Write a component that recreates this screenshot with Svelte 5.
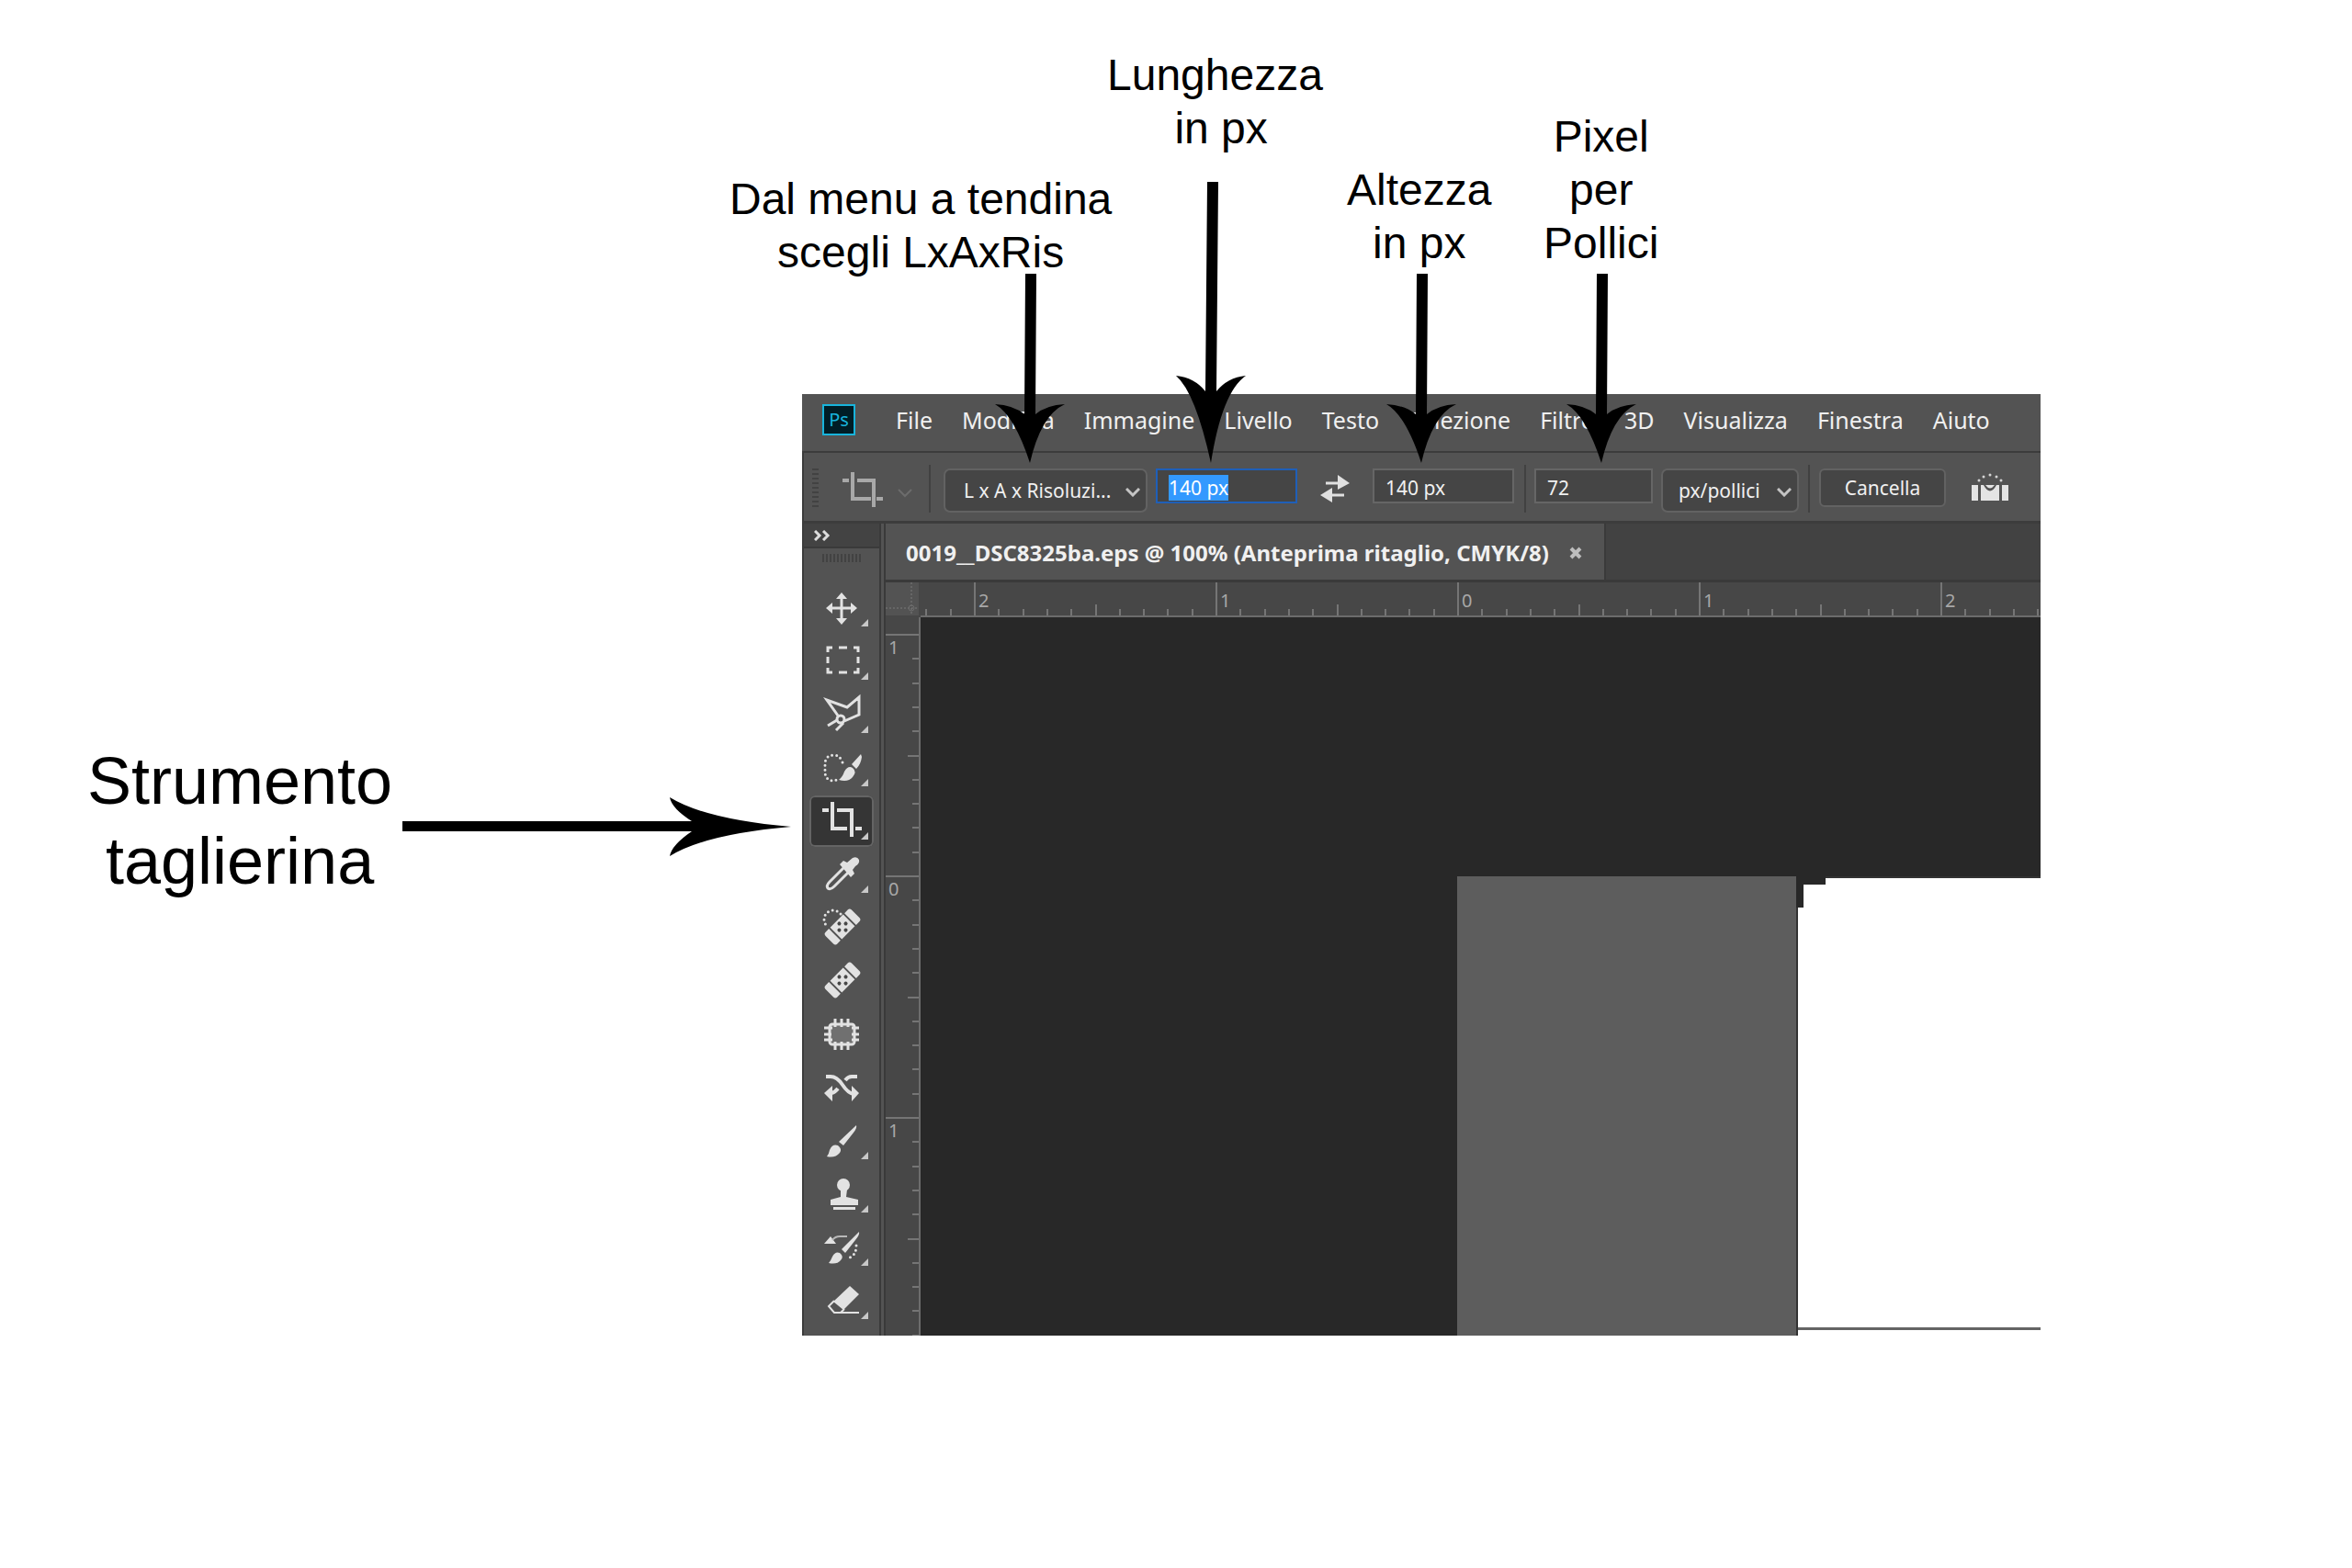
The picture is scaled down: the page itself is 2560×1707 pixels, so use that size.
<script lang="ts">
  import { onMount } from 'svelte';

  const menus = ['File', 'Modifica', 'Immagine', 'Livello', 'Testo', 'Selezione', 'Filtro', '3D', 'Visualizza', 'Finestra', 'Aiuto'];

  const tools = [
    { id: 'move', label: 'Sposta', more: true },
    { id: 'marquee', label: 'Selezione rettangolare', more: true },
    { id: 'lasso', label: 'Lazo poligonale', more: true },
    { id: 'quick', label: 'Selezione rapida', more: true },
    { id: 'crop', label: 'Taglierina', more: true },
    { id: 'dropper', label: 'Contagocce', more: true },
    { id: 'spot', label: 'Pennello correttivo al volo', more: false },
    { id: 'heal', label: 'Pennello correttivo', more: false },
    { id: 'patch', label: 'Toppa', more: false },
    { id: 'shuffle', label: 'Sposta in base al contenuto', more: false },
    { id: 'brush', label: 'Pennello', more: true },
    { id: 'stamp', label: 'Timbro clone', more: true },
    { id: 'history', label: 'Pennello storia', more: true },
    { id: 'eraser', label: 'Gomma', more: true }
  ];

  let activeTool = 'crop';
  let widthValue = '140 px';
  let heightValue = '140 px';
  let resolution = '72';
  let widthInput: HTMLInputElement;

  // ten divisions per unit on both rulers
  const unit = 263;

  function ticks(first: number, from: number, to: number, startLabel: number) {
    const list = [];
    for (let i = from; i <= to; i++) {
      const kind = i % 10 === 0 ? 'major' : i % 5 === 0 ? 'half' : 'minor';
      list.push({
        pos: first + Math.round((i * unit) / 10),
        kind,
        label: kind === 'major' ? Math.abs(startLabel - i / 10) : null
      });
    }
    return list;
  }

  const lengths = { major: 36, half: 12, minor: 7 };
  const hTicks = ticks(59, -2, 44, 2);
  const vTicks = ticks(19, 0, 29, 1);

  onMount(() => {
    widthInput.focus();
    widthInput.select();
  });
</script>

<main class="guide">
  <div class="app">
    <nav class="menubar">
      <svg class="logo" viewBox="0 0 36 34" role="img" aria-label="Ps">
        <rect x="1" y="1" width="34" height="32" fill="#001d26" stroke="#18b4dc" stroke-width="2" />
        <text x="18" y="24" text-anchor="middle">Ps</text>
      </svg>
      {#each menus as menu}
        <button class="menu">{menu}</button>
      {/each}
    </nav>

    <div class="options">
      <span class="grip"></span>
      <svg class="crop-icon" viewBox="0 0 44 38">
        <path d="M0 9h7M16 9h18v29M11 0v29h20M37 29h7" fill="none" stroke="#a8a8a8" stroke-width="4" />
      </svg>
      <svg class="preset-arrow" viewBox="0 0 16 10"><path d="M1 1l7 7 7-7" fill="none" stroke="#6c6c6c" stroke-width="2" /></svg>
      <span class="sep"></span>
      <span class="combo ratio">
        <select aria-label="Proporzioni">
          <option>L x A x Risoluzi...</option>
        </select>
        <svg viewBox="0 0 16 10"><path d="M1 1l7 7 7-7" fill="none" stroke="#c4c4c4" stroke-width="3" /></svg>
      </span>
      <input class="field active" aria-label="Larghezza" bind:this={widthInput} bind:value={widthValue} />
      <button class="swap" aria-label="Scambia altezza e larghezza">
        <svg viewBox="0 0 34 30">
          <path d="M7 9h14M13 22h14" stroke="#e0e0e0" stroke-width="3" />
          <path d="M20 0l13 9-13 7zM14 14L1 22l13 8z" fill="#e0e0e0" />
        </svg>
      </button>
      <input class="field" aria-label="Altezza" bind:value={heightValue} />
      <span class="sep"></span>
      <input class="field short" aria-label="Risoluzione" bind:value={resolution} />
      <span class="combo unit">
        <select aria-label="Unità">
          <option>px/pollici</option>
        </select>
        <svg viewBox="0 0 16 10"><path d="M1 1l7 7 7-7" fill="none" stroke="#c4c4c4" stroke-width="3" /></svg>
      </span>
      <span class="sep"></span>
      <button class="clear">Cancella</button>
      <button class="straighten" aria-label="Raddrizza">
        <svg viewBox="0 0 40 30">
          <path d="M0 13h7v17H0zM33 13h7v17h-7zM10 13h3q7 13 14 0h3v17H10z" fill="#e4e4e4" />
          <path d="M15 13h10q-5 7-10 0z" fill="#e4e4e4" />
          <g fill="#d4d4d4">
            <circle cx="8" cy="8" r="1.5" /><circle cx="13" cy="4" r="1.5" /><circle cx="20" cy="2" r="1.5" />
            <circle cx="27" cy="4" r="1.5" /><circle cx="32" cy="8" r="1.5" />
          </g>
        </svg>
      </button>
    </div>

    <div class="workspace">
      <aside class="toolbar">
        <button class="collapse" aria-label="Espandi pannello">
          <svg viewBox="0 0 18 12"><path d="M1 1l5 5-5 5M10 1l5 5-5 5" fill="none" stroke="#dcdcdc" stroke-width="3" /></svg>
        </button>
        <span class="handle"></span>
        <div class="tools">
          {#each tools as tool}
            <button
              class="tool"
              class:selected={activeTool === tool.id}
              aria-label={tool.label}
              on:click={() => (activeTool = tool.id)}
            >
              <svg viewBox="0 0 70 56">
                {#if tool.id === 'move'}
                  <path class="line" d="M35 15v27M21 28h28" />
                  <path class="fill" d="M35 11l6 7H29zM35 46l6-7H29zM18 28l7-6v12zM52 28l-7-6v12z" />
                {:else if tool.id === 'marquee'}
                  <path class="line" d="M20 18v-5h5M32 13h9M48 13h5v5M53 23v7M53 35v5h-5M41 40h-9M25 40h-5v-5M20 30v-7" />
                {:else if tool.id === 'lasso'}
                  <path class="line" d="M31 29L19 12l22 8 13-11v19l-16 7" />
                  <circle class="line" cx="34" cy="33" r="4" />
                  <path class="line" d="M30 34l-10 6M37 37l-8 8" />
                {:else if tool.id === 'quick'}
                  <path class="dots" d="M36 22Q33 14 27 14Q17 14 17 24V32Q17 42 27 42L32 40" />
                  <path class="fill" d="M32 41q4-3 6-9q4-7 9-4q5 4 0 10q-5 6-15 3zM46 24l10-11 1 3q-1 8-6 13z" />
                {:else if tool.id === 'crop'}
                  <path class="thick" d="M14 16h7M30 16h16v29M25 7v29h16M50 36h7" />
                {:else if tool.id === 'dropper'}
                  <path class="line" d="M38 20L22 36q-4 4-2 7q3 2 7-2L43 25" />
                  <path class="fill" d="M33 17l4-4 4 2 6-5q5-2 7 2q1 4-4 7l-3 4 2 4-4 4z" />
                {:else if tool.id === 'spot' || tool.id === 'heal'}
                  {#if tool.id === 'spot'}
                    <path class="dots" d="M34 13a10 10 0 1 0-14 14" />
                  {/if}
                  <g transform="rotate(-45 36 27)">
                    <path class="fill" d="M19 18h5v18h-5q-3 0-3-3V21q0-3 3-3zM26 18h20v18H26zM48 18h5q3 0 3 3v12q0 3-3 3h-5z" />
                    <g fill="#484848">
                      <circle cx="36" cy="22" r="2" /><circle cx="31" cy="27" r="2" />
                      <circle cx="41" cy="27" r="2" /><circle cx="36" cy="32" r="2" />
                    </g>
                  </g>
                {:else if tool.id === 'patch'}
                  <rect class="line" x="22" y="17" width="27" height="22" rx="3" style:fill="#707070" />
                  <path class="line" d="M28 11v9M35 11v9M42 11v9M28 36v9M35 36v9M42 36v9M16 21h9M16 28h8M16 34h9M46 21h8M46 28h8M46 34h8" />
                {:else if tool.id === 'shuffle'}
                  <path class="thick" d="M18 16h5q7 0 13 9t12 10M52 16h-6q-4 0-7 4M31 29q-3 4-7 5" />
                  <path class="fill" d="M46 26l8 8-8 9zM25 26l-9 8 9 9z" />
                {:else if tool.id === 'brush'}
                  <path class="fill" d="M19 45q2-2 3-7q3-7 9-5q5 4 2 8q-5 6-14 4zM32 29L51 11q1 3-3 8L37 33z" />
                {:else if tool.id === 'stamp'}
                  <circle class="fill" cx="37" cy="18" r="7" />
                  <path class="fill" d="M34 23h7l-1 8 13 3v6H23v-6l11-3zM26 42h24v3H26z" />
                {:else if tool.id === 'history'}
                  <path class="fill" d="M21 45q2-2 4-7q3-6 8-4q5 4 1 8q-4 5-13 3zM35 30L54 11q1 3-4 9L39 34zM16 24l7-8 6 8z" />
                  <path d="M25 20q3-4 8-4h8" fill="none" stroke="#b8b8b8" stroke-width="2" />
                  <path class="dots" d="M51 26Q51 36 44 39" />
                {:else if tool.id === 'eraser'}
                  <path class="fill" d="M44 12l10 9-17 17-11-9z" />
                  <path class="line" d="M27 28l-6 6 6 7h27M34 41l4-4" style:stroke-width="2" />
                {/if}
                {#if tool.more}
                  <path d="M64 40v8h-8z" fill="#c8c8c8" />
                {/if}
              </svg>
            </button>
          {/each}
        </div>
      </aside>

      <section class="document">
        <div class="tabs">
          <div class="tab">
            <span>0019__DSC8325ba.eps @ 100% (Anteprima ritaglio, CMYK/8)</span>
            <button aria-label="Chiudi">
              <svg viewBox="0 0 14 14"><path d="M2 2l10 10M12 2L2 12" stroke="#bdbdbd" stroke-width="4" /></svg>
            </button>
          </div>
        </div>
        <div class="sheet">
          <svg class="origin" viewBox="0 0 36 36">
            <path d="M28 0v36M0 28h36" stroke="#7a7a7a" stroke-dasharray="2 2" />
            <circle cx="28" cy="28" r="3" fill="none" stroke="#6c6c6c" />
          </svg>
          <svg class="ruler top">
            {#each hTicks as tick}
              <rect x={tick.pos - 1} y={36 - lengths[tick.kind]} width="2" height={lengths[tick.kind]} />
              {#if tick.label !== null}
                <text x={tick.pos + 4} y="27">{tick.label}</text>
              {/if}
            {/each}
          </svg>
          <svg class="ruler side">
            {#each vTicks as tick}
              <rect x={36 - lengths[tick.kind]} y={tick.pos - 1} width={lengths[tick.kind]} height="2" />
              {#if tick.label !== null}
                <text x="3" y={tick.pos + 21}>{tick.label}</text>
              {/if}
            {/each}
          </svg>
          <div class="canvas">
            <div class="shade"></div>
            <div class="artboard">
              <svg class="corner" viewBox="0 0 32 34"><path d="M0 0h32v9H8v25H0z" fill="#282828" /></svg>
            </div>
          </div>
        </div>
      </section>
    </div>
  </div>

  <!-- callouts drawn over the window -->
  <p class="note preset">Dal menu a tendina<br />scegli LxAxRis</p>
  <p class="note width">Lunghezza<br />&nbsp;in px</p>
  <p class="note height">Altezza<br />in px</p>
  <p class="note density">Pixel<br />per<br />Pollici</p>
  <p class="note big">Strumento<br />taglierina</p>

  {#each ['preset', 'height', 'density'] as name}
    <svg class="arrow {name}" viewBox="0 0 76 206">
      <path d="M33 0h12l-1 153Q56 143 76 142Q50 154 38 206Q21 154 0 142Q20 143 32 153z" />
    </svg>
  {/each}
  <svg class="arrow width" viewBox="0 0 76 306">
    <path d="M34 0h12l-2 228Q56 213 76 211Q50 229 38 306Q21 229 0 211Q20 213 32 228z" />
  </svg>
  <svg class="arrow tool-arrow" viewBox="0 0 423 64">
    <path d="M0 26h315Q293 12 291 0Q330 24 423 32Q330 40 291 64Q293 52 315 37H0z" />
  </svg>
</main>

<style>
  :global(body) {
    background: #fff;
  }

  .guide {
    position: relative;
    padding: 429px 339px 253px 873px;
    font-family: 'Noto Sans', 'Open Sans', sans-serif;
    color: #f0f0f0;
  }

  button {
    padding: 0;
    border: 0;
    background: none;
    color: inherit;
    font: inherit;
  }

  svg {
    display: block;
    flex: none;
  }

  .app {
    background: #535353;
    overflow: hidden;
  }

  .menubar {
    display: flex;
    align-items: center;
    gap: 32px;
    height: 64px;
    box-sizing: border-box;
    padding: 0 22px 6px;
    border-bottom: 2px solid #3c3c3c;
    font-size: 25px;
    white-space: nowrap;
  }

  .logo {
    width: 36px;
    height: 34px;
    margin-right: 12px;
  }

  .logo text {
    fill: #18b4dc;
    font-size: 20px;
  }

  .options {
    display: flex;
    align-items: flex-start;
    height: 77px;
    box-sizing: border-box;
    padding: 17px 0 0 9px;
    border-left: 2px solid #3c3c3c;
    border-bottom: 3px solid #3c3c3c;
    font-size: 21px;
  }

  .grip {
    width: 7px;
    height: 44px;
    background: repeating-linear-gradient(#424242 0 2px, transparent 2px 5px);
  }

  .crop-icon {
    width: 44px;
    height: 38px;
    margin: 4px 16px 0 26px;
  }

  .preset-arrow {
    width: 16px;
    height: 10px;
    margin: 22px 18px 0 0;
  }

  .sep {
    width: 2px;
    height: 52px;
    margin-top: -4px;
    background: #414141;
  }

  .combo {
    position: relative;
    height: 48px;
  }

  .combo select {
    width: 100%;
    height: 100%;
    box-sizing: border-box;
    padding: 0 16px 0 20px;
    border: 2px solid #626262;
    border-radius: 7px;
    background: #454545;
    color: #f0f0f0;
    font: inherit;
    appearance: none;
  }

  .combo svg {
    position: absolute;
    right: 8px;
    top: 21px;
    width: 16px;
    height: 10px;
    pointer-events: none;
  }

  .ratio {
    width: 222px;
    margin: 0 9px 0 14px;
  }

  .unit {
    width: 150px;
    margin: 0 10px 0 9px;
  }

  .unit select {
    padding-left: 17px;
  }

  .field {
    width: 154px;
    height: 38px;
    box-sizing: border-box;
    padding: 4px 10px 0 12px;
    border: 2px solid #666;
    border-radius: 0;
    background: #454545;
    color: #f0f0f0;
    font: inherit;
    outline: none;
  }

  .field.active {
    border-color: #1f5fb8;
  }

  .field::selection {
    background: #3399ff;
    color: #fff;
  }

  .field + .sep {
    margin-right: 9px;
    margin-left: 11px;
  }

  .field.short {
    width: 129px;
  }

  .swap {
    margin: 7px 24px 0;
  }

  .swap svg {
    width: 34px;
    height: 30px;
  }

  .clear {
    width: 138px;
    height: 42px;
    margin: 0 28px 0 10px;
    border: 2px solid #626262;
    border-radius: 6px;
    background: #454545;
  }

  .straighten {
    margin-top: 5px;
  }

  .straighten svg {
    width: 40px;
    height: 30px;
  }

  .workspace {
    display: flex;
  }

  .toolbar {
    width: 82px;
    flex: none;
    border-left: 2px solid #3c3c3c;
    border-right: 2px solid #3a3a3a;
  }

  .collapse {
    display: flex;
    align-items: center;
    width: 100%;
    height: 27px;
    padding-left: 11px;
    border-bottom: 2px solid #3a3a3a;
    background: #434343;
  }

  .collapse svg {
    width: 18px;
    height: 12px;
  }

  .handle {
    display: block;
    width: 44px;
    height: 9px;
    margin: 6px 0 22px 20px;
    background: repeating-linear-gradient(90deg, #424242 0 2px, transparent 2px 4px);
  }

  .tools {
    display: flex;
    flex-direction: column;
    gap: 2px;
    padding: 0 6px 10px;
  }

  .tool {
    height: 56px;
    border-radius: 6px;
  }

  .tool svg {
    width: 70px;
    height: 56px;
  }

  .tool.selected {
    background: #353535;
    box-shadow: inset 0 0 0 2px #646464;
  }

  .fill {
    fill: #e2e2e2;
  }

  .line,
  .thick,
  .dots {
    fill: none;
    stroke: #e2e2e2;
    stroke-width: 3;
  }

  .thick {
    stroke-width: 4;
  }

  .dots {
    stroke-linecap: round;
    stroke-dasharray: 0 5;
  }

  .document {
    display: flex;
    flex-direction: column;
    flex: 1;
    min-width: 0;
    margin-left: 3px;
    border-left: 2px solid #3a3a3a;
  }

  .tabs {
    height: 61px;
    border-bottom: 3px solid #3a3a3a;
    background: #424242;
    display: flex;
  }

  .tab {
    display: flex;
    align-items: center;
    gap: 22px;
    padding: 2px 24px 0 22px;
    border-right: 2px solid #3a3a3a;
    background: #535353;
    font-size: 24px;
    font-weight: 700;
    white-space: nowrap;
  }

  .tab svg {
    width: 14px;
    height: 14px;
  }

  .sheet {
    display: grid;
    grid-template: 38px 1fr / 38px 1fr;
    flex: 1;
    background: #474747;
  }

  .origin {
    width: 36px;
    height: 36px;
    background: #535353;
  }

  .ruler {
    fill: #757575;
    font-size: 20px;
    overflow: hidden;
  }

  .ruler text {
    fill: #a8a8a8;
  }

  .top {
    width: 100%;
    height: 38px;
    box-sizing: border-box;
    border-bottom: 2px solid #6c6c6c;
  }

  .side {
    width: 38px;
    height: 100%;
    box-sizing: border-box;
    border-right: 2px solid #6c6c6c;
  }

  .canvas {
    display: flex;
    padding: 282px 0 0 584px;
    background: #282828;
  }

  .shade {
    width: 369px;
    flex: none;
    background: #5d5d5d;
  }

  .artboard {
    position: relative;
    flex: 1;
    box-sizing: border-box;
    border-left: 2px solid #333;
    border-top: 2px solid #333;
    background: linear-gradient(#646464, #646464) 0 calc(100% - 6px) / 100% 3px no-repeat #fff;
  }

  .corner {
    position: absolute;
    left: -2px;
    top: -2px;
    width: 32px;
    height: 34px;
  }

  .note {
    position: absolute;
    margin: 0;
    color: #000;
    font-family: 'Liberation Sans', Arial, sans-serif;
    font-size: 48px;
    line-height: 58px;
    text-align: center;
    white-space: nowrap;
  }

  .note.preset { left: 794px; top: 188px; }
  .note.width { left: 1205px; top: 53px; }
  .note.height { left: 1466px; top: 178px; }
  .note.density { left: 1680px; top: 120px; }

  .note.big {
    left: 95px;
    top: 807px;
    font-size: 72px;
    line-height: 87px;
  }

  .arrow {
    position: absolute;
    top: 298px;
    width: 76px;
    height: 206px;
    pointer-events: none;
  }

  .arrow.preset { left: 1083px; }
  .arrow.height { left: 1509px; }
  .arrow.density { left: 1705px; }

  .arrow.width {
    left: 1280px;
    top: 198px;
    height: 306px;
  }

  .arrow.tool-arrow {
    left: 438px;
    top: 868px;
    width: 423px;
    height: 64px;
  }
</style>
